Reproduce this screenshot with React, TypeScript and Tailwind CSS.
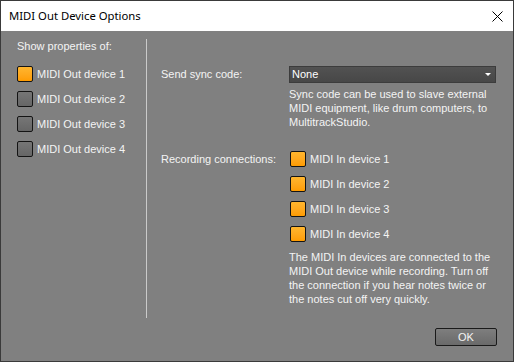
import { useState } from 'react'

const Box = ({ on, onClick }: { on: boolean; onClick?: () => void }) => (
  <span
    onClick={onClick}
    className={
      'w-4 h-4 shrink-0 rounded-[2px] border border-[#141414] ' +
      (on
        ? 'bg-gradient-to-b from-[#ffb62e] to-[#ff9c00]'
        : 'bg-gradient-to-b from-[#767676] to-[#666666]')
    }
  />
)

const Check = ({ label, on, onClick }: { label: string; on: boolean; onClick?: () => void }) => (
  <div className="flex items-center gap-[4px] h-4 cursor-default" onClick={onClick}>
    <Box on={on} />
    <span className="leading-[14px]">{label}</span>
  </div>
)

export default function App() {
  const [out, setOut] = useState(0)
  const [ins, setIns] = useState([true, true, true, true])

  return (
    <div
      className="w-[514px] h-[362px] border border-[#3a3a3a] flex flex-col overflow-hidden"
      style={{ fontFamily: '"Liberation Sans", Arial, sans-serif' }}
    >
      <div className="h-[30px] shrink-0 bg-white flex items-center justify-between pl-[8px] pr-[10px]">
        <span className="text-[11.3px] text-black" style={{ fontFamily: '"Noto Sans", sans-serif' }}>
          MIDI Out Device Options
        </span>
        <svg width="11" height="11" viewBox="0 0 11 11">
          <path d="M0.5 0.5L10.5 10.5M10.5 0.5L0.5 10.5" stroke="#000" strokeWidth="1" />
        </svg>
      </div>

      <div className="flex-1 bg-[#808080] flex flex-col text-[11px] text-[#f4f4f4]">
        <div className="h-[287px] flex">
          <div className="w-[145px] pt-[8px] pl-[16px]">
            <div className="leading-[14px]">Show properties of:</div>
            <div className="mt-[13px] flex flex-col gap-[9px]">
              {[1, 2, 3, 4].map((n, i) => (
                <Check key={n} label={`MIDI Out device ${n}`} on={out === i} onClick={() => setOut(i)} />
              ))}
            </div>
          </div>

          <div className="w-px mt-[8px] bg-[#cacaca]" />

          <div className="flex-1 pl-[14px] pt-[35px] grid grid-cols-[128px_207px] content-start">
            <div className="h-[17px] flex items-center">Send sync code:</div>
            <div>
              <div className="h-[17px] flex items-center justify-between border border-[#3c3c3c] bg-gradient-to-b from-[#525252] to-[#474747] pl-[2px] pr-[4px] text-white">
                <span>None</span>
                <svg width="6" height="4" viewBox="0 0 6 4">
                  <path d="M0 0H6L3 3Z" fill="#fff" />
                </svg>
              </div>
              <p className="mt-[4px] leading-[14px]">
                Sync code can be used to slave external MIDI equipment, like drum computers, to MultitrackStudio.
              </p>
            </div>

            <div className="mt-[22px] h-4 flex items-center">Recording connections:</div>
            <div className="mt-[22px] pl-[1px]">
              <div className="flex flex-col gap-[9px]">
                {[1, 2, 3, 4].map((n, i) => (
                  <Check
                    key={n}
                    label={`MIDI In device ${n}`}
                    on={ins[i]}
                    onClick={() => setIns(ins.map((v, j) => (j === i ? !v : v)))}
                  />
                ))}
              </div>
              <p className="mt-[8px] -ml-[1px] leading-[14px] w-[205px]">
                The MIDI In devices are connected to the MIDI Out device while recording. Turn off the connection if you
                hear notes twice or the notes cut off very quickly.
              </p>
            </div>
          </div>
        </div>

        <div className="flex justify-end pr-[16px] mt-[10px]">
          <button className="w-[62px] h-[18px] rounded-[2px] border border-[#1a1a1a] bg-gradient-to-b from-[#7e7e7e] to-[#6a6a6a] text-[11px] text-[#f4f4f4] leading-none">
            OK
          </button>
        </div>
      </div>
    </div>
  )
}
